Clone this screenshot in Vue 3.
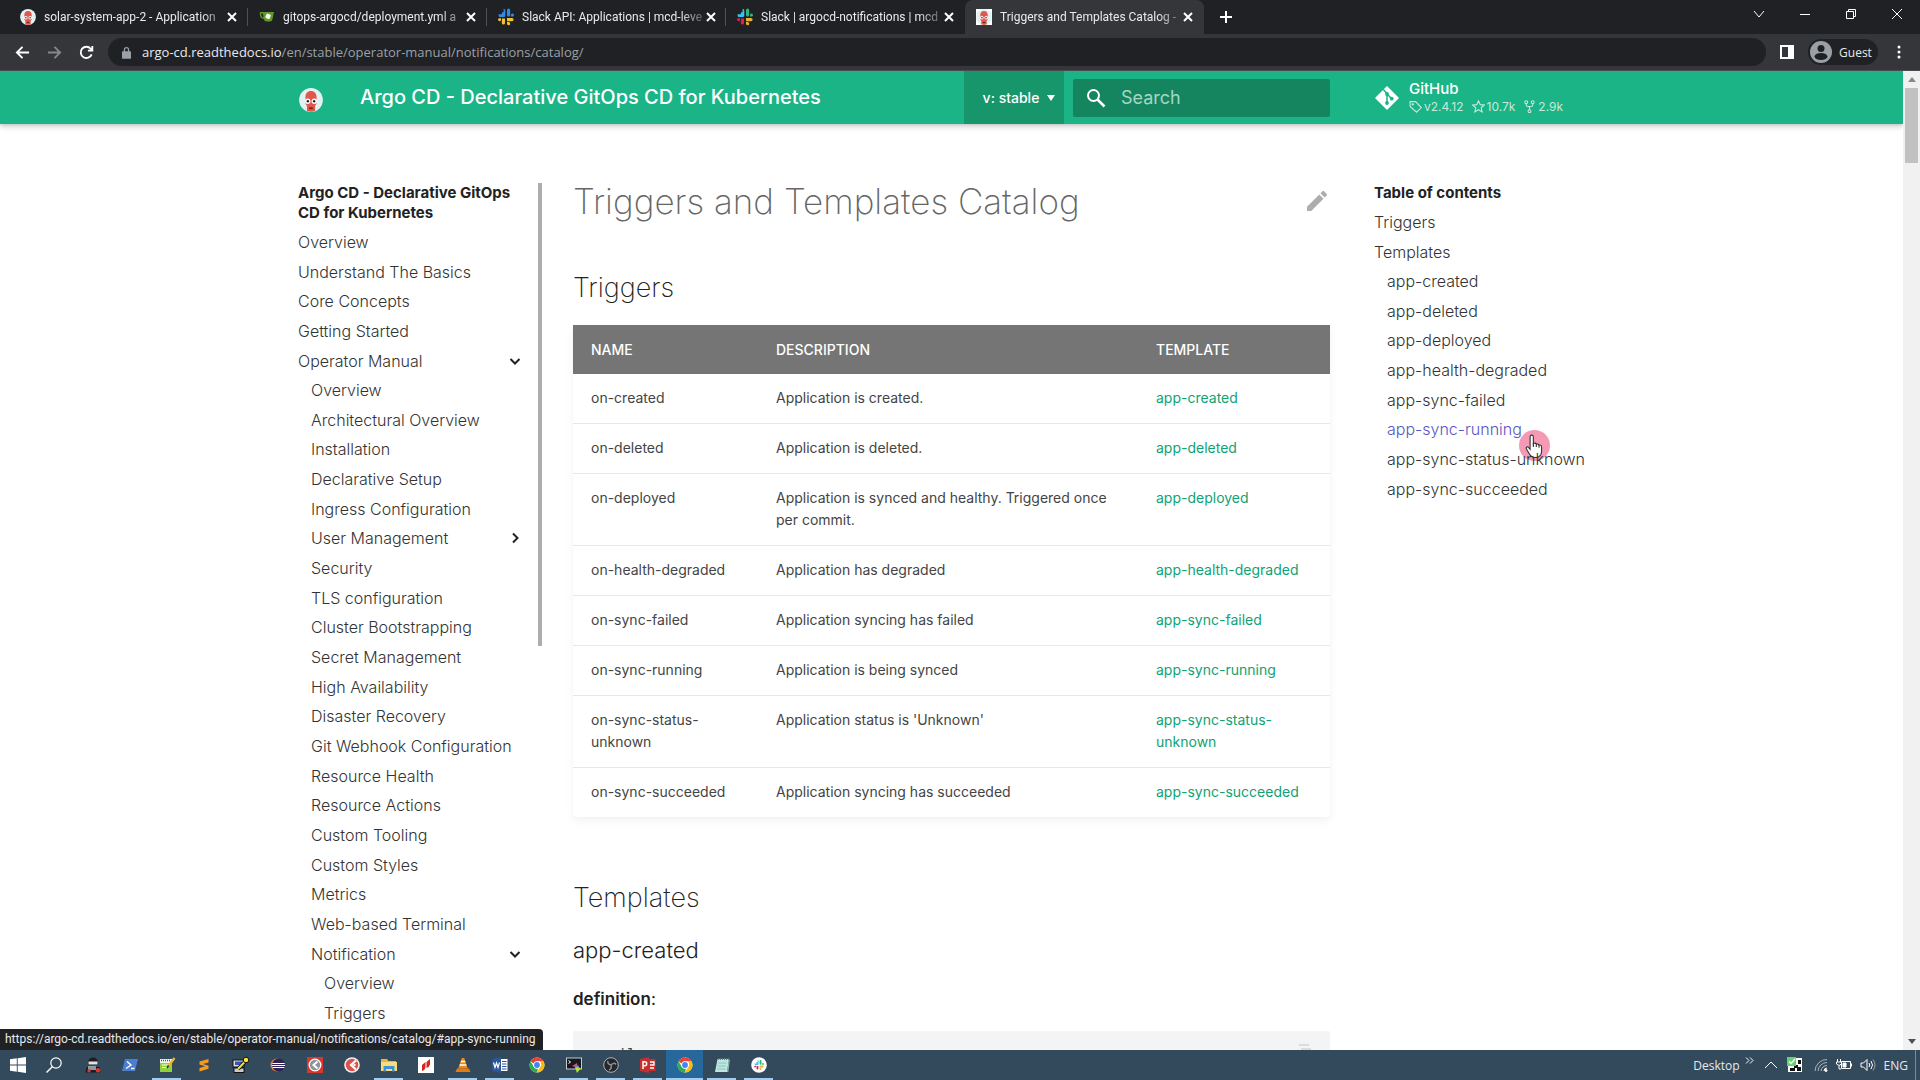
<script setup>
const tabs = [
  { title: 'solar-system-app-2 - Application', icon: 'argo' },
  { title: 'gitops-argocd/deployment.yml a', icon: 'gitea' },
  { title: 'Slack API: Applications | mcd-leve', icon: 'slackApi' },
  { title: 'Slack | argocd-notifications | mcd', icon: 'slack' },
  { title: 'Triggers and Templates Catalog -', icon: 'argo', active: true },
]

const topNav = ['Overview', 'Understand The Basics', 'Core Concepts', 'Getting Started']
const manualNav = [
  { text: 'Overview' },
  { text: 'Architectural Overview' },
  { text: 'Installation' },
  { text: 'Declarative Setup' },
  { text: 'Ingress Configuration' },
  { text: 'User Management', closed: true },
  { text: 'Security' },
  { text: 'TLS configuration' },
  { text: 'Cluster Bootstrapping' },
  { text: 'Secret Management' },
  { text: 'High Availability' },
  { text: 'Disaster Recovery' },
  { text: 'Git Webhook Configuration' },
  { text: 'Resource Health' },
  { text: 'Resource Actions' },
  { text: 'Custom Tooling' },
  { text: 'Custom Styles' },
  { text: 'Metrics' },
  { text: 'Web-based Terminal' },
  { text: 'Notification', children: ['Overview', 'Triggers'] },
]

const rows = [
  ['on-created', 'Application is created.', 'app-created'],
  ['on-deleted', 'Application is deleted.', 'app-deleted'],
  ['on-deployed', 'Application is synced and healthy. Triggered once per commit.', 'app-deployed'],
  ['on-health-degraded', 'Application has degraded', 'app-health-degraded'],
  ['on-sync-failed', 'Application syncing has failed', 'app-sync-failed'],
  ['on-sync-running', 'Application is being synced', 'app-sync-running'],
  ['on-sync-status-unknown', "Application status is 'Unknown'", 'app-sync-status-unknown'],
  ['on-sync-succeeded', 'Application syncing has succeeded', 'app-sync-succeeded'],
]
const templates = rows.map((r) => r[2])

const apps = [
  { id: 'ninja', label: 'Ninja' },
  { id: 'powershell', label: 'PowerShell' },
  { id: 'npp', label: 'Notepad++', open: true },
  { id: 'sublime', label: 'Sublime Text' },
  { id: 'putty', label: 'Key tool' },
  { id: 'eclipse', label: 'Eclipse' },
  { id: 'camRed', label: 'Camtasia' },
  { id: 'camWhite', label: 'Recorder' },
  { id: 'explorer', label: 'File Explorer', open: true },
  { id: 'nitro', label: 'Nitro' },
  { id: 'vlc', label: 'VLC', open: true },
  { id: 'word', label: 'Word', open: true },
  { id: 'chrome', label: 'Chrome' },
  { id: 'cmder', label: 'Terminal', open: true },
  { id: 'obs', label: 'OBS', open: true },
  { id: 'ppt', label: 'PowerPoint', open: true },
  { id: 'chrome', label: 'Chrome window', open: true, active: true },
  { id: 'notepad', label: 'Notepad', open: true },
  { id: 'slackRound', label: 'Slack', open: true },
]

const slackMark = (a, b, c, d) => `
<path fill="${a}" d="M5 0a1.7 1.7 0 0 1 1.7 1.7V5A1.7 1.7 0 0 1 3.300 5V3.400H5zM0 5.500h6.700V7A1.600 1.600 0 0 1 5 8.200H1.500A1.500 1.500 0 0 1 0 6.700z" transform="translate(.6 -.2)"/>
<path fill="${b}" d="M9 .2a1.600 1.600 0 0 1 3.200 0V5A1.600 1.600 0 0 1 9 5zM13 5a1.500 1.500 0 1 1 1.500 1.600H13z" transform="translate(0 1)"/>
<path fill="${c}" d="M9 9h5a1.600 1.600 0 0 1 0 3.200H9zM9 13h1.600A1.600 1.600 0 1 1 9 14.500z"/>
<path fill="${d}" d="M4 9.500h3V14a1.600 1.600 0 0 1-3.200 0zM3 9.200V11a1.500 1.500 0 1 1-1.500-1.800z"/>`

const chrome = `
<circle cx="8" cy="8" r="7.500" fill="#fff"/>
<path fill="#ea4335" d="M8 .5a7.500 7.500 0 0 1 6.500 3.750H8a3.750 3.750 0 0 0-3.400 2.200L1.500 4.250A7.500 7.500 0 0 1 8 .5z"/>
<path fill="#fbbc04" d="M14.500 4.250A7.500 7.500 0 0 1 8 15.500l3.250-5.600a3.750 3.750 0 0 0-.8-5.650z"/>
<path fill="#34a853" d="M1.500 4.250l3.250 5.600A3.750 3.750 0 0 0 9 11.650L8 15.500a7.500 7.500 0 0 1-6.500-11.250z"/>
<circle cx="8" cy="8" r="3.600" fill="#fff"/><circle cx="8" cy="8" r="2.900" fill="#4285f4"/>`

const argo = `
<ellipse cx="8" cy="8" rx="7.900" ry="8" fill="#e3f1f3"/>
<path fill="#e2574c" d="M8 2C5.700 2 4.300 3.600 4.300 6v4.500l1 1.500v3.300q2.700 1 5.400 0V12l1-1.500V6c0-2.400-1.400-4-3.700-4z"/>
<circle cx="5.800" cy="8.800" r="1.800" fill="#fff"/><circle cx="10.200" cy="8.800" r="1.800" fill="#fff"/>
<circle cx="5.900" cy="8.800" r=".8" fill="#222"/><circle cx="10.100" cy="8.800" r=".8" fill="#222"/>
<path d="M6.800 13.500h2.400" stroke="#7d1f1a" stroke-width="1.200"/>`

const art = {
  argo,
  gitea: `<path fill="#609926" d="M1 3h14l-1.600 7.500Q13 12.500 11 12.500H7.500Q5.500 12.500 4.800 10 1 9.500.8 5.500.7 4 1 3zm1.200 1.400Q2 8 4.400 8.600L4 4.400z"/><rect x="6.800" y="5" width="4.600" height="4.600" rx="1" fill="#fff" transform="rotate(25 9 7.300)"/>`,
  slackApi: slackMark('#2d8ce8', '#2d8ce8', '#f2c230', '#f2c230'),
  slack: slackMark('#36c5f0', '#2eb67d', '#ecb22e', '#e01e5a'),
  slackRound: `<circle cx="8" cy="8" r="7.800" fill="#fff"/><g transform="translate(3.200 3.200) scale(.6)">${slackMark('#36c5f0', '#2eb67d', '#ecb22e', '#e01e5a')}</g>`,
  chrome,
  ninja: `<path fill="#1b1d20" d="M8 .5a5 5 0 0 1 5 5V8H3V5.500a5 5 0 0 1 5-5zM1.500 10h13l1 5.500H.5z"/><rect x="3.500" y="4.500" width="9" height="3" fill="#dfe3e6"/><rect x="3" y="9" width="8" height="4" fill="#8e979e"/><circle cx="4" cy="13.800" r="1.700" fill="#e5322d"/><circle cx="13" cy="13.200" r="2.200" fill="#e5322d"/>`,
  powershell: `<path fill="#4c7dcf" d="M3 2h13l-3 12H0z"/><path d="M5 4.500l4 3.500-5 3.500M9 11.500h3.500" fill="none" stroke="#fff" stroke-width="1.400"/>`,
  npp: `<rect x="1" y="2" width="12" height="13" fill="#f4f6ee"/><path fill="#8ed13c" d="M1 6h12v9H1z"/><path d="M2 3.500h10" stroke="#555" stroke-width="1.500" stroke-dasharray="1 1"/><path d="M3 8h8M3 10.500h6" stroke="#fff"/><path d="M15.500 1L9 9.500" stroke="#e9b92d" stroke-width="2.400"/><path d="M9.600 8.500L8 11" stroke="#333" stroke-width="1.500"/>`,
  sublime: `<path fill="#f79a1e" d="M3.500 4.500l9-2.500v3.500L7 7l5.500 1.700v3l-9 2.800V11L9 9.300 3.500 7.500z"/>`,
  putty: `<rect x="0" y="3" width="11" height="7" fill="#d9dce0" stroke="#111"/><rect x="2" y="4.500" width="7" height="3.500" fill="#3a50c8"/><rect x="1" y="11" width="10" height="4.500" fill="#c9cdd1" stroke="#111"/><path d="M5 12L13.500 3" stroke="#111" stroke-width="4"/><path d="M5 12L13.500 3" stroke="#f3e53a" stroke-width="2"/><circle cx="13" cy="3" r="2.800" fill="#f3e53a" stroke="#111"/>`,
  eclipse: `<circle cx="7" cy="8" r="6.500" fill="#f08b3c"/><circle cx="8.500" cy="8" r="6.500" fill="#2c2255"/><path d="M2.300 6.500h12.400M2 8.500h13M2.600 10.500h11.800" stroke="#fff"/>`,
  camRed: `<rect width="16" height="16" fill="#d7372f"/><circle cx="8" cy="8" r="5.800" fill="#8f9296" stroke="#fff" stroke-width="1.300"/><path d="M10.500 4.500L6.500 8l4 3.500" fill="none" stroke="#fff" stroke-width="2"/>`,
  camWhite: `<circle cx="8" cy="8" r="7.800" fill="#f7eeee"/><circle cx="8" cy="8" r="6.200" fill="#d9534c"/><path d="M12 3.500L7 8l5 4.500" fill="none" stroke="#fff" stroke-width="2.200"/><circle cx="10.500" cy="8" r="1.200" fill="#fff"/>`,
  explorer: `<path fill="#e9b53a" d="M0 2h6l1.500 2H15v3H0z"/><path fill="#fbdc7d" d="M0 5h16v9H0z"/><path fill="#3e93d8" d="M2.500 14.500V9h11v5.500h-2.500V12H5v2.500z"/>`,
  nitro: `<rect width="16" height="16" fill="#fff"/><path fill="#d8261c" d="M7.500 5L4 8v6q3-1 3.500-3.500zM12 2L8.500 5v6q3-1 3.500-3.500z"/>`,
  vlc: `<path fill="#f08a1d" d="M6.800 1h2.400l3.600 10.500H3.200z"/><path d="M5.800 4.500h4.400M4.700 8h6.600" stroke="#fff" stroke-width="1.700"/><path fill="#e57a12" d="M2 11.500h12l1.500 3.500H.5z"/>`,
  word: `<path fill="#2b579a" d="M0 2l9-2v16l-9-2z"/><rect x="9" y="2" width="6.500" height="12" fill="#fff"/><path d="M10 4.500h4.500M10 7h4.500M10 9.500h4.500M10 12h4.500" stroke="#2b579a"/><path d="M1.500 5.500L3 10.500 4.500 6 6 10.500l1.500-5" fill="none" stroke="#fff" stroke-width="1.200"/>`,
  cmder: `<rect x=".5" y="1" width="15" height="11" fill="#17191c" stroke="#c8ccd0"/><path d="M2.500 3.500l2 1.500-2 1.500" fill="none" stroke="#fff"/><path fill="#e0457b" d="M6 9l5-3 1 5z"/><path fill="#37a6e6" d="M8 12l4-4 2 4z"/><path fill="#b6e334" d="M9 10l6 1-4 5z"/>`,
  obs: `<circle cx="8" cy="8" r="7.300" fill="#24272b" stroke="#aeb2b6"/><path d="M8 8q-4-1-3-4M8 8q3-3 5-.5M8 8q1 4-2 5" fill="none" stroke="#8d9195" stroke-width="1.500"/>`,
  ppt: `<path fill="#c62f2b" d="M0 2l9-2v16l-9-2z"/><rect x="9" y="2" width="6.500" height="12" fill="#c62f2b"/><path d="M3 12V4.700h1.700a2 2 0 0 1 0 4H3" fill="none" stroke="#fff" stroke-width="1.500"/><path d="M10 5h4v3h-4M10 11h4" fill="none" stroke="#fff" stroke-width="1.300"/>`,
  notepad: `<path fill="#bfe5e0" d="M3.500 2H15l-2 13H1z"/><path fill="#8fbdb8" d="M13 15l2-13 .8 1-1.500 12z"/><path d="M4 2h11" stroke="#5d7f7c" stroke-width="2" stroke-dasharray="1 1"/><path d="M4 6h8.500M3.500 9h8.500M3 12h8.500" stroke="#8fc4be"/>`,
}
</script>

<template>
  <div class="screen">
    <div class="tabstrip">
      <div v-for="t in tabs" :key="t.title" class="tab" :class="{ active: t.active }">
        <svg class="favicon" viewBox="0 0 16 16" v-html="art[t.icon]"></svg>
        <span class="tab-title">{{ t.title }}</span>
        <button class="tab-close" aria-label="Close tab">
          <svg viewBox="0 0 10 10"><path d="M1 1l8 8M9 1L1 9" /></svg>
        </button>
      </div>
      <button class="new-tab" aria-label="New tab">
        <svg viewBox="0 0 12 12"><path d="M6 0v12M0 6h12" /></svg>
      </button>
      <div class="window-controls">
        <button aria-label="Search tabs"><svg viewBox="0 0 12 12"><path d="M1 3l5 6 5-6" /></svg></button>
        <button aria-label="Minimize"><svg viewBox="0 0 12 12"><path d="M1 6.500h10" /></svg></button>
        <button aria-label="Restore"><svg viewBox="0 0 12 12"><path d="M1.500 3.500h7v7h-7zM3.500 3.500v-2h7v7h-2" /></svg></button>
        <button aria-label="Close"><svg viewBox="0 0 12 12"><path d="M1 1l10 10M11 1L1 11" /></svg></button>
      </div>
    </div>

    <div class="toolbar">
      <button class="nav-btn" aria-label="Back"><svg viewBox="0 0 16 16"><path d="M15 8H2M8 2L2 8l6 6" /></svg></button>
      <button class="nav-btn dim" aria-label="Forward"><svg viewBox="0 0 16 16"><path d="M1 8h13M8 2l6 6-6 6" /></svg></button>
      <button class="nav-btn" aria-label="Reload"><svg viewBox="0 0 16 16"><path d="M13.500 10A6 6 0 1 1 12.500 4L14 5.500M14.200 1v5H9.500" /></svg></button>
      <div class="address" role="textbox" aria-label="Address">
        <svg class="lock" viewBox="0 0 10 14"><path fill="#9aa0a6" d="M1 5.500h1V4a3 3 0 0 1 6 0v1.500h1q1 0 1 1V13q0 1-1 1H1q-1 0-1-1V6.500q0-1 1-1zm2.400 0h3.200V4a1.600 1.600 0 0 0-3.200 0z" /></svg>
        <span class="host">argo-cd.readthedocs.io</span><span class="path">/en/stable/operator-manual/notifications/catalog/</span>
      </div>
      <button class="panel-btn" aria-label="Side panel"><svg viewBox="0 0 14 14"><path fill="#fff" fill-rule="evenodd" d="M0 0h14v14H0zM2 2v10h6V2z" /></svg></button>
      <button class="guest">
        <svg viewBox="0 0 22 22"><circle cx="11" cy="11" r="11" fill="#9aa0a6" /><circle cx="11" cy="7.500" r="3.500" fill="#202124" /><ellipse cx="11" cy="15.500" rx="6.500" ry="3.500" fill="#202124" /></svg>
        Guest
      </button>
      <button class="menu-btn" aria-label="Menu"><svg viewBox="0 0 4 14"><circle cx="2" cy="2" r="1.500" /><circle cx="2" cy="7" r="1.500" /><circle cx="2" cy="12" r="1.500" /></svg></button>
    </div>

    <div class="viewport">
      <div class="page">
        <header class="header">
          <div class="header-inner">
            <svg class="logo" viewBox="0 0 16 16" v-html="art.argo"></svg>
            <a href="#" class="site-title">Argo CD - Declarative GitOps CD for Kubernetes</a>
            <button class="version">v: stable <svg viewBox="0 0 8 6"><path fill="#fff" d="M0 0h8L4 6z" /></svg></button>
            <label class="search">
              <svg viewBox="0 0 20 20"><circle cx="7.500" cy="7.500" r="5.500" fill="none" stroke="#fff" stroke-width="2" /><path d="M11.500 11.500l7 7" stroke="#fff" stroke-width="2.500" /></svg>
              <input type="search" placeholder="Search" aria-label="Search" />
            </label>
            <a href="#" class="source">
              <svg class="git" viewBox="0 0 24 24"><path fill="#fff" d="M12 0L24 12 12 24 0 12z" /><path d="M8.300 3.500l3.700 4v10M12 8l5 5" fill="none" stroke="#1ab486" stroke-width="1.500" /><circle cx="12" cy="8" r="1.900" fill="#1ab486" /><circle cx="12" cy="17" r="1.900" fill="#1ab486" /><circle cx="16.700" cy="12.700" r="1.900" fill="#1ab486" /></svg>
              <span class="repo">
                <span class="repo-name">GitHub</span>
                <span class="facts">
                  <svg viewBox="0 0 12 12"><path d="M1 1.500h5L11.300 7 7 11.300 1 6z" /><circle cx="3.500" cy="4" r=".6" /></svg><span class="fact">v2.4.12</span>
                  <svg viewBox="0 0 12 12"><path d="M6 .8l1.600 3.500 3.800.4-2.900 2.500.9 3.800L6 9l-3.400 2 .9-3.800L.6 4.700l3.800-.4z" /></svg><span class="fact">10.7k</span>
                  <svg viewBox="0 0 12 12"><circle cx="3" cy="2" r="1.300" /><circle cx="9" cy="2" r="1.300" /><circle cx="6" cy="10.300" r="1.300" /><path d="M3 3.300v1.200Q3 6 4.500 6h3Q9 6 9 4.500V3.300M6 6v3" /></svg><span class="fact">2.9k</span>
                </span>
              </span>
            </a>
          </div>
        </header>

        <div class="columns">
          <nav class="sidebar" aria-label="Site">
            <div class="side-list">
              <p class="side-title">Argo CD - Declarative GitOps CD for Kubernetes</p>
              <ul class="nav-list">
                <li v-for="n in topNav" :key="n"><a href="#">{{ n }}</a></li>
                <li>
                  <a href="#" class="section">Operator Manual<svg viewBox="0 0 12 12"><path d="M1.500 4l4.500 4.500L10.500 4" /></svg></a>
                  <ul class="nav-list nested">
                    <li v-for="n in manualNav" :key="n.text">
                      <a href="#" :class="{ section: n.closed || n.children }">{{ n.text }}<svg v-if="n.closed" viewBox="0 0 12 12"><path d="M4 1.500L8.500 6 4 10.500" /></svg><svg v-if="n.children" viewBox="0 0 12 12"><path d="M1.500 4l4.500 4.500L10.500 4" /></svg></a>
                      <ul v-if="n.children" class="nav-list nested">
                        <li v-for="c in n.children" :key="c"><a href="#">{{ c }}</a></li>
                      </ul>
                    </li>
                  </ul>
                </li>
              </ul>
            </div>
            <div class="side-scroll"></div>
          </nav>

          <main class="article">
            <div class="heading">
              <h1>Triggers and Templates Catalog</h1>
              <a href="#" aria-label="Edit this page"><svg viewBox="3 3 18 18"><path fill="#adadad" d="M20.710 7.040c.39-.39.39-1.040 0-1.410l-2.340-2.340c-.37-.39-1.020-.39-1.410 0l-1.840 1.830 3.750 3.750M3 17.250V21h3.750L17.810 9.930l-3.750-3.750z" /></svg></a>
            </div>
            <h2>Triggers</h2>
            <table>
              <colgroup><col class="c-name" /><col class="c-desc" /><col class="c-tpl" /></colgroup>
              <thead><tr><th>NAME</th><th>DESCRIPTION</th><th>TEMPLATE</th></tr></thead>
              <tbody>
                <tr v-for="r in rows" :key="r[0]"><td>{{ r[0] }}</td><td>{{ r[1] }}</td><td><a href="#">{{ r[2] }}</a></td></tr>
              </tbody>
            </table>
            <h2 class="second">Templates</h2>
            <h3>app-created</h3>
            <p class="definition"><strong>definition</strong>:</p>
            <div class="code">
              <pre>email:</pre>
              <button aria-label="Copy"><svg viewBox="0 0 14 14"><path d="M1 1h10v2H1zM3 5h10v9H3z" fill="#dcdcdc" /></svg></button>
            </div>
          </main>

          <nav class="toc" aria-label="Table of contents">
            <p class="side-title">Table of contents</p>
            <ul class="nav-list">
              <li><a href="#">Triggers</a></li>
              <li>
                <a href="#">Templates</a>
                <ul class="nav-list nested">
                  <li v-for="t in templates" :key="t" :class="{ hovered: t === 'app-sync-running' }">
                    <a href="#">{{ t }}</a>
                    <span v-if="t === 'app-sync-running'" class="pointer">
                      <svg viewBox="0 0 18 22"><path d="M6 1q1.500 0 1.500 1.500V9l.5-.5q1.800-.6 2.300.8 1.700-.6 2.300.8 2.400-.4 2.400 2V16q0 5-5 5.500-4 .2-6-3L1 13.500q-.3-2 1.600-1.600L4.500 14V2.500Q4.500 1 6 1z" fill="#fff" stroke="#333" /><path d="M7.500 8.500V12M10.200 9v3M12.700 10v2.500" stroke="#333" /></svg>
                    </span>
                  </li>
                </ul>
              </li>
            </ul>
          </nav>
        </div>
      </div>

      <div class="scrollbar">
        <svg viewBox="0 0 8 5"><path fill="#888" d="M0 5l4-5 4 5z" /></svg>
        <div class="thumb"></div>
        <svg class="down" viewBox="0 0 8 5"><path fill="#505050" d="M0 0l4 5 4-5z" /></svg>
      </div>
      <div class="status">https://argo-cd.readthedocs.io/en/stable/operator-manual/notifications/catalog/#app-sync-running</div>
    </div>

    <footer class="taskbar">
      <button class="task sys" aria-label="Start"><svg viewBox="0 0 16 16"><path fill="#fff" d="M0 2.300l6.800-1v6.200H0zM7.700 1.200L16 0v7.500H7.700zM0 8.400h6.800v6.300L0 13.800zM7.700 8.400H16V16l-8.300-1.200z" /></svg></button>
      <button class="task sys find" aria-label="Search"><svg viewBox="0 0 16 16"><circle cx="10" cy="6" r="5.200" fill="none" stroke="#fff" stroke-width="1.200" /><path d="M6.300 9.700L.5 15.500" stroke="#fff" stroke-width="1.400" /></svg></button>
      <button v-for="a in apps" :key="a.label" class="task" :class="{ open: a.open, active: a.active }" :aria-label="a.label">
        <svg viewBox="0 0 16 16" v-html="art[a.id]"></svg>
      </button>
      <div class="tray">
        <span class="desk">Desktop</span>
        <svg class="more" viewBox="0 0 9 7"><path d="M1 .5l3 3-3 3M5 .5l3 3-3 3" /></svg>
        <svg class="up" viewBox="0 0 14 8"><path d="M1 7l6-6 6 6" /></svg>
        <svg class="t16" viewBox="0 0 16 16"><g stroke="none"><path fill="#fff" d="M1 1h14v14H1z" /><path fill="#111" d="M11 3h3v4h-3v3h3v4h-4v-3H8v3H3v-3h4V9h2V8h2z" /><path fill="#62d36f" d="M0 0h9v9H0z" /></g><path d="M2 4.500l2 2 4-4.500" stroke="#fff" stroke-width="1.500" /></svg>
        <svg class="t14 wifi" viewBox="0 0 14 14"><path d="M1 13A12 12 0 0 1 13 1.500M4 13a9 9 0 0 1 9-8.500M7 13a6 6 0 0 1 6-5.500" opacity=".6" /><path d="M10 13a3 3 0 0 1 3-3" /><circle cx="12" cy="12.500" r="1" fill="#fff" /></svg>
        <svg class="t16" viewBox="0 0 16 16"><path d="M5.500 4.500h9v7h-9zM15.500 6.500v3M1.500 2v3M4.500 2v3M.5 5h5v2L3 8.500.5 7zM3 8.500V12h2" /><path fill="#fff" d="M7 6h3v4H7z" /></svg>
        <svg class="t16" viewBox="0 0 16 16"><path d="M1 6h2.500L7 2.500v11L3.500 10H1zM9 6q1.500 2 0 4M11 4q3 4 0 8" /><path d="M13 2.500q4 5.500 0 11" opacity=".5" /></svg>
        <span class="lang">ENG</span>
        <span class="peek"></span>
      </div>
    </footer>
  </div>
</template>

<style>
body { margin: 0; }
</style>

<style scoped>
* { box-sizing: border-box; }
.screen {
  height: 100vh;
  display: flex;
  flex-direction: column;
  overflow: hidden;
  background: #fff;
  color: #333;
  font-family: Inter, "Liberation Sans", sans-serif;
}
button { border: 0; padding: 0; margin: 0; background: none; color: inherit; font: inherit; display: flex; align-items: center; justify-content: center; }
a { color: inherit; text-decoration: none; }
ul { list-style: none; margin: 0; padding: 0; }
h1, h2, h3, p, pre { margin: 0; }
svg { display: block; flex: none; }

.toolbar, .taskbar { font-family: "Open Sans", "Noto Sans", sans-serif; }
.tabstrip, .status { font-family: Roboto, "Open Sans", sans-serif; }
.tabstrip { flex: none; height: 34px; display: flex; background: #202124; padding-left: 9px; }
.tab { position: relative; width: 239px; display: flex; align-items: center; padding: 0 9px 0 11px; }
.tab:not(.active)::after { content: ""; position: absolute; right: 0; top: 8px; width: 1px; height: 18px; background: #4f5154; }
.tab:nth-child(4)::after { display: none; }
.tab.active { background: #35363a; border-radius: 8px 8px 0 0; }
.favicon { width: 16px; height: 16px; overflow: visible; }
.tab.active .favicon { background: #fff; }
.tab-title {
  flex: 1; margin: 0 2px 0 8px; white-space: nowrap; font-size: 12px; line-height: 18px; color: #e8eaed;
  -webkit-mask-image: linear-gradient(90deg, #000 88%, rgba(0, 0, 0, .3));
  mask-image: linear-gradient(90deg, #000 88%, rgba(0, 0, 0, .3));
}
.tab-close svg { width: 10px; height: 10px; }
.tab-close { width: 14px; }
.tabstrip button path { fill: none; stroke: #fff; stroke-width: 1; }
.tabstrip .tab-close path, .tabstrip .new-tab path { stroke-width: 2; }
.new-tab { width: 44px; }
.new-tab svg { width: 12px; height: 12px; }
.window-controls { margin-left: auto; display: flex; height: 28px; }
.window-controls button { width: 46px; }
.window-controls svg { width: 12px; height: 12px; }

.toolbar { flex: none; height: 37px; display: flex; align-items: center; background: #35363a; padding: 0 10px; border-bottom: 1px solid #4a4b4f; }
.nav-btn { width: 24px; margin-right: 8px; }
.nav-btn svg { width: 15px; height: 15px; }
.nav-btn path { fill: none; stroke: #fff; stroke-width: 2; }
.nav-btn.dim path { stroke: #85878a; }
.address { flex: 1; height: 28px; display: flex; align-items: center; margin-left: 2px; padding-left: 14px; border-radius: 14px; background: #202124; font-size: 13px; color: #9aa0a6; white-space: nowrap; }
.lock { width: 9px; height: 13px; margin-right: 11px; }
.host { color: #e8eaed; }
.panel-btn { width: 42px; }
.panel-btn svg { width: 14px; height: 14px; }
.guest { height: 26px; width: 70px; gap: 7px; padding-right: 4px; border-radius: 13px; background: #202124; color: #e8eaed; font-size: 12px; }
.guest svg { width: 22px; height: 22px; }
.menu-btn { width: 22px; margin-left: 10px; }
.menu-btn svg { width: 4px; height: 14px; fill: #fff; }

.viewport { flex: 1; min-height: 0; position: relative; display: flex; overflow: hidden; }
.page { flex: 1; min-width: 0; overflow: hidden; }
.header { height: 53px; background: #1ab486; color: #fff; box-shadow: 0 0 4px rgba(0, 0, 0, .2), 0 3px 6px rgba(0, 0, 0, .15); }
.header-inner, .columns { max-width: 1343px; margin: 0 auto; display: flex; }
.header-inner { height: 100%; align-items: center; padding-left: 19px; }
.logo { width: 24px; height: 24px; margin: 4px 37px 0 0; }
.site-title { flex: 1; font-size: 20px; line-height: 24px; padding-bottom: 2px; font-weight: 500; white-space: nowrap; }
.version { height: 100%; width: 100px; gap: 8px; padding-left: 10px; background: #17966c; font-size: 14px; font-weight: 500; }
.version svg { width: 8px; height: 6px; }
.search { width: 257px; height: 38px; margin-left: 9px; display: flex; align-items: center; padding-left: 13px; background: #158560; border-radius: 2px; }
.search svg { width: 20px; height: 20px; }
.search input { width: 180px; margin-left: 15px; padding: 0; border: 0; outline: 0; background: none; color: #fff; font: 400 18px Inter, "Liberation Sans", sans-serif; }
.search input::placeholder { color: #a5d7c5; opacity: 1; }
.source { width: 293px; display: flex; align-items: center; padding-left: 45px; }
.git { width: 24px; height: 24px; margin-right: 10px; }
.repo { display: flex; flex-direction: column; }
.repo-name { font-size: 15px; line-height: 18px; font-weight: 500; }
.facts { display: flex; align-items: center; font-size: 12px; line-height: 18px; color: #c4eadd; }
.facts svg { width: 13px; height: 13px; margin-right: 2px; fill: none; stroke: #c4eadd; stroke-width: 1; }
.fact { margin-right: 8px; }

.sidebar { flex: none; width: 266px; display: flex; padding: 59px 4px 0 18px; }
.side-list { flex: 1; padding-right: 17px; }
.side-scroll { width: 4px; height: 463px; background: #adadad; }
.side-title { font-size: 15px; line-height: 20px; font-weight: 700; color: #222; }
.nav-list { font-size: 16px; line-height: 20px; font-weight: 300; color: #333; }
.nav-list li { position: relative; margin-top: 10px; white-space: nowrap; }
.nav-list li:nth-child(3n), .nav-list li:first-child { margin-top: 9px; }
.nav-list.nested { padding-left: 13px; }
.nav-list a { display: block; }
.nav-list a.section { display: flex; justify-content: space-between; align-items: center; }
.section svg { width: 12px; height: 12px; fill: none; stroke: #222; stroke-width: 2; }

.article { flex: 1; min-width: 0; padding: 55px 27px 0 27px; }
.heading { display: flex; justify-content: space-between; align-items: center; }
h1 { font-size: 35px; line-height: 44px; font-weight: 200; color: #666; white-space: nowrap; }
.heading svg { width: 20px; height: 20px; margin-right: 3px; }
h2 { font-size: 27px; line-height: 36px; font-weight: 200; color: #222; margin: 47px 0 19px; }
table { width: 100%; table-layout: fixed; border-collapse: collapse; font-size: 14px; line-height: 22px; font-weight: 400; color: #444; box-shadow: 0 4px 10px rgba(0, 0, 0, .05), 0 0 1px rgba(0, 0, 0, .1); border-radius: 2px; }
.c-name { width: 185px; }
.c-desc { width: 380px; }
th { background: #757575; color: #fff; font-weight: 500; font-size: 14px; line-height: 23px; text-align: left; padding: 13px 18px; }
td { padding: 13px 18px 14px; vertical-align: top; }
tbody tr + tr td { border-top: 1px solid #e8e8e8; }
td a { color: #0fa274; }
h2.second { margin: 63px 0 0; }
h3 { font-size: 22px; line-height: 30px; font-weight: 300; margin-top: 19px; color: #222; }
.definition { font-size: 17px; line-height: 28px; margin-top: 20px; color: #222; }
.definition strong { font-weight: 600; }
.code { display: flex; justify-content: space-between; height: 80px; margin-top: 18px; padding: 12px 18px; background: #f4f4f4; border-radius: 2px; }
.code button { align-items: flex-start; }
.code svg { width: 14px; height: 14px; }
pre { font: 15px/24px "DejaVu Sans Mono", monospace; color: #37474f; }

.toc { flex: none; width: 266px; padding: 59px 0 0 17px; }
.hovered > a { color: #5a55c4; }
.pointer { position: absolute; left: 132px; top: 11px; width: 31px; height: 31px; border-radius: 50%; background: #f49ab5; display: flex; align-items: center; justify-content: center; }
.pointer svg { width: 20px; height: 24px; }

.scrollbar { flex: none; width: 17px; background: #f1f1f1; display: flex; flex-direction: column; align-items: center; padding: 6px 0; }
.scrollbar svg { width: 8px; height: 5px; }
.thumb { width: 13px; height: 75px; margin-top: 6px; background: #c1c1c1; }
.scrollbar .down { margin-top: auto; }
.status { position: absolute; left: 0; bottom: 0; height: 21px; padding: 0 7px 0 5px; background: #202124; color: #e8eaed; font-size: 12px; line-height: 21px; border-radius: 0 4px 0 0; white-space: nowrap; }

.taskbar { flex: none; height: 30px; display: flex; background: #33495c; }
.task { width: 37px; height: 30px; position: relative; }
.task svg { width: 16px; height: 16px; overflow: visible; }
.sys { width: 36px; }
.find { margin-right: 2px; }
.open::after { content: ""; position: absolute; left: 4px; right: 4px; bottom: 0; height: 2px; background: #a3cdf0; }
.active.task { background: #26689b; }
.active.task::after { left: 0; right: 0; }
.tray { margin-left: auto; display: flex; align-items: center; color: #e6eaed; font-size: 12px; }
.tray svg { fill: none; stroke: #fff; stroke-width: 1; }
.more { width: 9px; height: 7px; margin: 0 10px 10px 5px; }
.up { width: 14px; height: 8px; margin-right: 9px; }
.t16 { width: 16px; height: 16px; margin-right: 8px; }
.t14 { width: 14px; height: 14px; margin: 0 8px 0 3px; }
.peek { width: 5px; height: 30px; margin-left: 7px; border-left: 1px solid #7b8a97; }
</style>
